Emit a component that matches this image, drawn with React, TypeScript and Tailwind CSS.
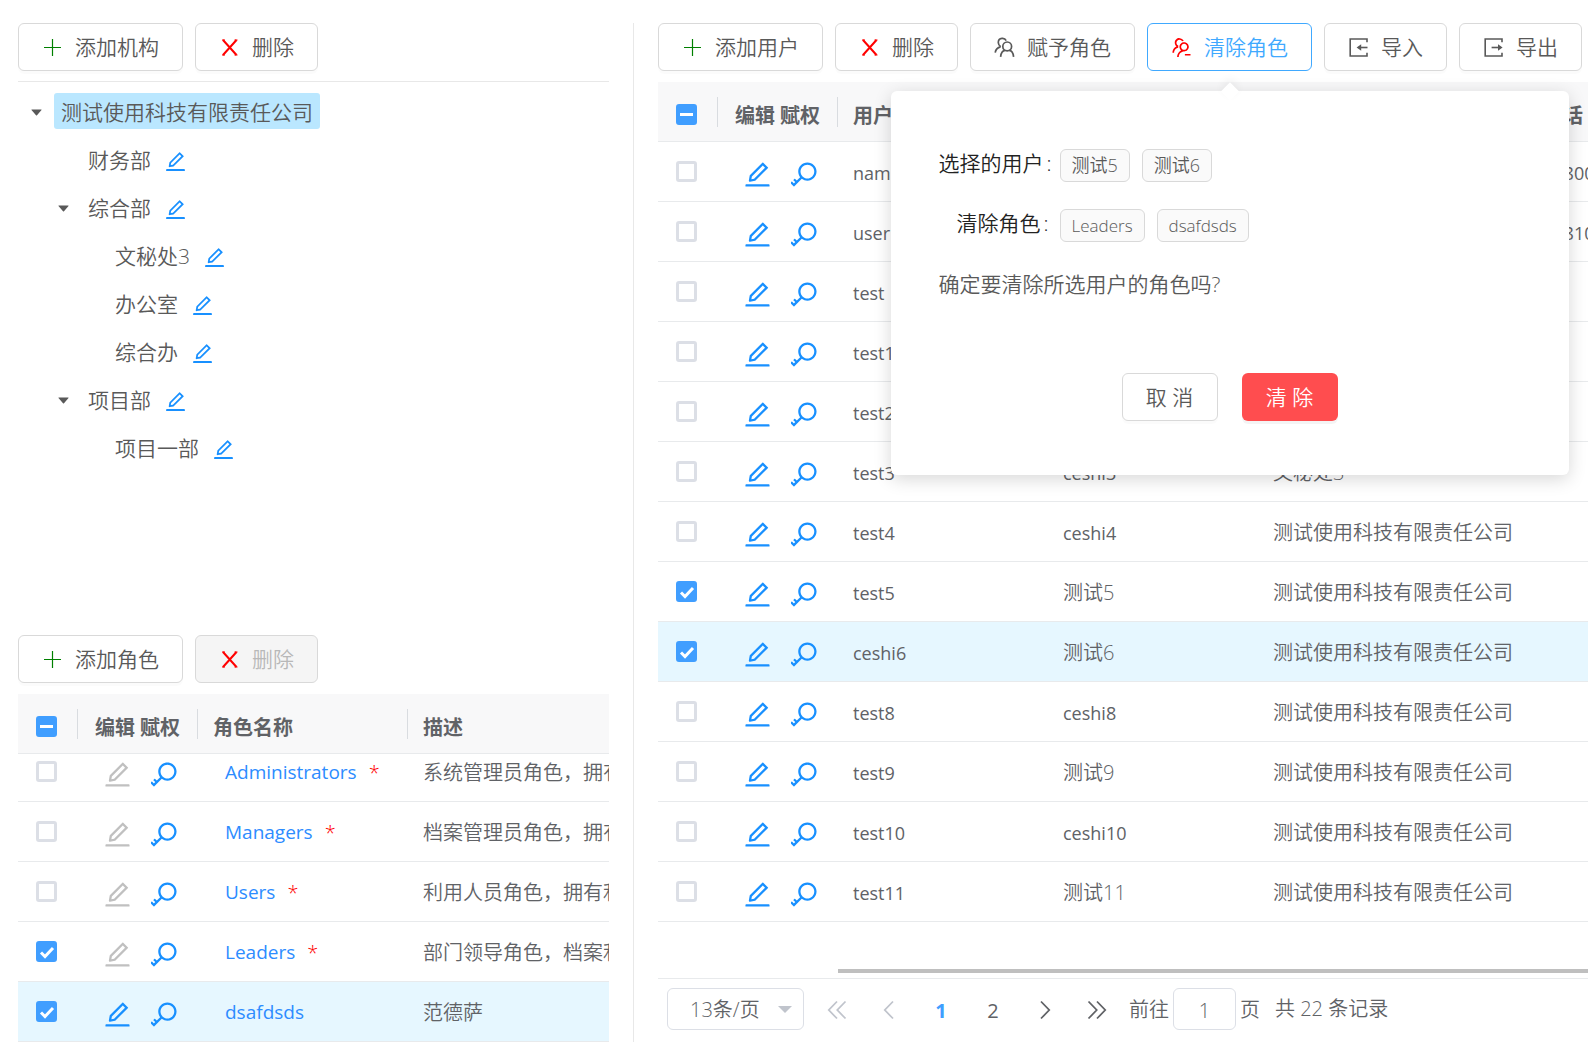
import type { ComponentType, ReactNode } from "react";
import { AiFillCaretDown, AiOutlineEdit, AiOutlineKey, AiOutlineUsergroupDelete } from "react-icons/ai";

type IconType = ComponentType<any>;

const TIGHT = "64 64 896 896";

function Icon({ as: As, className }: { as: IconType; className: string }) {
  return <As viewBox={TIGHT} className={`shrink-0 ${className}`} aria-hidden="true" />;
}

function PlusIcon({ className }: { className: string }) {
  return (
    <svg viewBox="0 0 21 21" className={`shrink-0 ${className}`} fill="none" stroke="currentColor" strokeWidth="1.2" aria-hidden="true">
      <path d="M10.5 2V19M2 10.5H19" />
    </svg>
  );
}

function CrossIcon({ className }: { className: string }) {
  return (
    <svg viewBox="0 0 21 21" className={`shrink-0 ${className}`} fill="none" stroke="currentColor" strokeWidth="2" aria-hidden="true">
      <path d="M4 3L17.5 18M17.5 3L4 18" />
      <path d="M3 3H6M15.5 3H18.5M3 18H6M15.5 18H18.5" strokeWidth="1" />
    </svg>
  );
}

function UsersIcon({ className }: { className: string }) {
  return (
    <svg viewBox="0 0 21 21" className={`shrink-0 ${className}`} fill="none" stroke="currentColor" strokeWidth="1.7" aria-hidden="true">
      <circle cx="13.2" cy="9.4" r="4.4" />
      <path d="M6.6 19.8C7 16.2 9 13.6 11.2 13.4M19.6 19.8C19.2 16.2 17.4 13.6 15.2 13.4" />
      <path d="M12.2 3.6C11.4 2 9.8 1.2 8 1.4C5.6 1.7 4.2 3.6 4.3 5.8C4.4 7.6 5.4 9 6.8 9.8M6.6 9.8C3.6 10.4 1.6 12.6 1.2 15.6" />
    </svg>
  );
}

function TransferIcon({ inward = false, className }: { inward?: boolean; className: string }) {
  return (
    <svg viewBox="0 0 21 21" className={`shrink-0 ${className}`} fill="none" stroke="currentColor" strokeWidth="1.6" aria-hidden="true">
      <path d="M19 5.2V2H2.2V19H19V15.8" />
      {inward ? (
        <>
          <path d="M19.5 10.5H12" />
          <path d="M8.6 10.5L13.2 7.2V13.8Z" fill="currentColor" stroke="none" />
        </>
      ) : (
        <>
          <path d="M8.6 10.5H16" />
          <path d="M19.6 10.5L15 7.2V13.8Z" fill="currentColor" stroke="none" />
        </>
      )}
    </svg>
  );
}

function ToolButton({
  icon,
  children,
  active = false,
  disabled = false,
}: {
  icon: ReactNode;
  children: ReactNode;
  active?: boolean;
  disabled?: boolean;
}) {
  const tone = active
    ? "border-[#40a9ff] bg-white text-[#40a9ff]"
    : disabled
      ? "border-[#d9d9d9] bg-[#f5f5f5] text-[#b8b8b8]"
      : "border-[#d9d9d9] bg-white text-[#595959] shadow-[0_3px_0_rgba(0,0,0,0.016)]";
  return (
    <button
      type="button"
      disabled={disabled}
      className={`flex h-12 shrink-0 items-center gap-3 rounded-md border px-[23px] text-[21px] whitespace-nowrap ${tone}`}
    >
      {icon}
      <span className="pt-0.5">{children}</span>
    </button>
  );
}

const plus = <PlusIcon className="size-[21px] text-[#008000]" />;
const cross = <CrossIcon className="size-[21px] text-[#ff0000]" />;

function Checkbox({ label, checked = false, mixed = false }: { label: string; checked?: boolean; mixed?: boolean }) {
  const filled = checked || mixed;
  return (
    <span className="grid size-[21px] shrink-0">
      <input
        type="checkbox"
        aria-label={label}
        aria-checked={mixed ? "mixed" : checked}
        defaultChecked={checked}
        className={`size-[21px] appearance-none rounded-[3px] border-[3px] [grid-area:1/1] ${
          filled ? "border-[#409eff] bg-[#409eff]" : "border-[#dcdfe6] bg-white"
        }`}
      />
      {filled && (
        <svg viewBox="0 0 21 21" className="pointer-events-none size-[21px] [grid-area:1/1]" fill="none" stroke="#fff" strokeWidth="3" aria-hidden="true">
          <path d={mixed ? "M4 10.5H17" : "M5 11.5L9 15.5L17 7"} />
        </svg>
      )}
    </span>
  );
}

function RowActions({ name, locked = false }: { name: string; locked?: boolean }) {
  return (
    <div className="flex justify-center gap-5 pt-1.5 pl-[5px]">
      <button type="button" aria-label={`编辑 ${name}`} disabled={locked} className={locked ? "text-[#c0c0c0]" : "text-[#1890ff]"}>
        <Icon as={AiOutlineEdit} className="size-[27px]" />
      </button>
      <button type="button" aria-label={`赋权 ${name}`} className="text-[#1890ff]">
        <Icon as={AiOutlineKey} className="size-[27px]" />
      </button>
    </div>
  );
}

function HeadCell({ children, className = "", line = true }: { children: ReactNode; className?: string; line?: boolean }) {
  return (
    <th scope="col" className="h-[60px] border-b border-[#e8eaec] p-0 text-left font-bold">
      <div className={`flex h-[30px] items-center whitespace-nowrap ${line ? "border-r border-[#d9dce0]" : ""} ${className}`}>{children}</div>
    </th>
  );
}

const tree = [
  { name: "测试使用科技有限责任公司", level: 0, open: true, selected: true },
  { name: "财务部", level: 1 },
  { name: "综合部", level: 1, open: true },
  { name: "文秘处3", level: 2 },
  { name: "办公室", level: 2 },
  { name: "综合办", level: 2 },
  { name: "项目部", level: 1, open: true },
  { name: "项目一部", level: 2 },
];

const indents = ["pl-0", "pl-[27px]", "pl-[54px]"];

function OrgTree() {
  return (
    <ul role="tree" aria-label="机构" className="border-t border-[#e8e8e8] pt-[5px] text-[21px] text-[#595959]">
      {tree.map((n) => (
        <li key={n.name} role="treeitem" aria-selected={!!n.selected} className={`flex h-12 items-center ${indents[n.level]}`}>
          <span className="flex w-9 shrink-0 justify-center pt-[3px]">
            {n.open && (
              <button type="button" aria-label={`收起 ${n.name}`}>
                <Icon as={AiFillCaretDown} className="size-[13px]" />
              </button>
            )}
          </span>
          <span className={`flex h-9 items-center rounded-[3px] px-[7px] pt-[3px] ${n.selected ? "bg-[#bae7ff]" : ""}`}>{n.name}</span>
          {!n.selected && (
            <button type="button" aria-label={`编辑 ${n.name}`} className="ml-[7px] pt-[5px] text-[#1890ff]">
              <Icon as={AiOutlineEdit} className="size-[21px]" />
            </button>
          )}
        </li>
      ))}
    </ul>
  );
}

const roles = [
  { name: "Administrators", desc: "系统管理员角色，拥有系统管理权限", system: true },
  { name: "Managers", desc: "档案管理员角色，拥有档案管理权限", system: true },
  { name: "Users", desc: "利用人员角色，拥有利用权限", system: true },
  { name: "Leaders", desc: "部门领导角色，档案利用审批", system: true, checked: true },
  { name: "dsafdsds", desc: "范德萨", checked: true, current: true },
];

function RoleCols() {
  return (
    <colgroup>
      <col className="w-[60px]" />
      <col className="w-[120px]" />
      <col className="w-[210px]" />
      <col />
    </colgroup>
  );
}

function RoleTable() {
  return (
    <div className="text-[20px] text-[#606266]">
      <table className="w-full table-fixed border-separate border-spacing-0 bg-[#f8f8f9]">
        <RoleCols />
        <thead>
          <tr>
            <HeadCell className="pt-1.5 pl-[18px]">
              <Checkbox label="全选角色" mixed />
            </HeadCell>
            <HeadCell className="justify-center pt-2">编辑 赋权</HeadCell>
            <HeadCell className="pt-2 pl-[15px]">角色名称</HeadCell>
            <HeadCell className="pt-2 pl-[15px]" line={false}>
              描述
            </HeadCell>
          </tr>
        </thead>
      </table>
      <div className="flex h-[288px] flex-col justify-end overflow-hidden">
        <table className="w-full shrink-0 table-fixed border-separate border-spacing-0">
          <RoleCols />
          <tbody>
            {roles.map((r) => (
              <tr key={r.name} className={`*:h-[60px] *:border-b *:border-[#e8eaec] *:p-0 ${r.current ? "bg-[#e6f7ff]" : ""}`}>
                <td>
                  <div className="pl-[18px]">
                    <Checkbox label={r.name} checked={r.checked} />
                  </div>
                </td>
                <td>
                  <RowActions name={r.name} locked={r.system} />
                </td>
                <td>
                  <div className="flex items-center gap-3 pt-0.5 pl-[27px] whitespace-nowrap">
                    <a href="#" className="text-[19px] font-normal text-[#2d8cff]">
                      {r.name}
                    </a>
                    {r.system && <span className="text-[#ff0000]">*</span>}
                  </div>
                </td>
                <td>
                  <div className="overflow-hidden pt-0.5 pl-[15px] whitespace-nowrap">{r.desc}</div>
                </td>
              </tr>
            ))}
          </tbody>
        </table>
      </div>
    </div>
  );
}

const company = "测试使用科技有限责任公司";

const users = [
  { login: "name", name: "测试", org: company, phone: "13800138000" },
  { login: "user", name: "ceshi", org: company, phone: "13810013810" },
  { login: "test", name: "ceshi", org: company, phone: "" },
  { login: "test1", name: "ceshi1", org: company, phone: "" },
  { login: "test2", name: "ceshi2", org: company, phone: "" },
  { login: "test3", name: "ceshi3", org: "文秘处3", phone: "" },
  { login: "test4", name: "ceshi4", org: company, phone: "" },
  { login: "test5", name: "测试5", org: company, phone: "", checked: true },
  { login: "ceshi6", name: "测试6", org: company, phone: "", checked: true, current: true },
  { login: "test8", name: "ceshi8", org: company, phone: "" },
  { login: "test9", name: "测试9", org: company, phone: "" },
  { login: "test10", name: "ceshi10", org: company, phone: "" },
  { login: "test11", name: "测试11", org: company, phone: "" },
];

/* Latin-only values are set one step smaller and heavier, to sit evenly beside the Chinese ones. */
function CellText({ children }: { children: string }) {
  const latin = /^\w*$/.test(children);
  return <div className={`pt-[3px] pl-[15px] ${latin ? "text-[18px] font-normal" : ""}`}>{children}</div>;
}

function UserTable() {
  return (
    <div className="flex min-h-0 flex-1 flex-col overflow-hidden text-[20px] text-[#606266]">
      <table className="w-[1080px] table-fixed border-separate border-spacing-0">
        <colgroup>
          <col className="w-[60px]" />
          <col className="w-[120px]" />
          <col className="w-[210px]" />
          <col className="w-[210px]" />
          <col className="w-[270px]" />
          <col className="w-[210px]" />
        </colgroup>
        <thead className="bg-[#f8f8f9]">
          <tr>
            <HeadCell className="pt-1.5 pl-[18px]">
              <Checkbox label="全选用户" mixed />
            </HeadCell>
            <HeadCell className="justify-center pt-2">编辑 赋权</HeadCell>
            <HeadCell className="pt-2 pl-[15px]">用户名</HeadCell>
            <HeadCell className="pt-2 pl-[15px]">姓名</HeadCell>
            <HeadCell className="pt-2 pl-[15px]">机构</HeadCell>
            <HeadCell className="pt-2 pl-[15px]">电话</HeadCell>
          </tr>
        </thead>
        <tbody>
          {users.map((u) => (
            <tr
              key={u.login}
              className={`*:h-[60px] *:border-b *:border-[#e8eaec] *:p-0 *:whitespace-nowrap ${u.current ? "bg-[#e6f7ff]" : ""}`}
            >
              <td>
                <div className="pl-[18px]">
                  <Checkbox label={u.login} checked={u.checked} />
                </div>
              </td>
              <td>
                <RowActions name={u.login} />
              </td>
              <td>
                <CellText>{u.login}</CellText>
              </td>
              <td>
                <CellText>{u.name}</CellText>
              </td>
              <td>
                <CellText>{u.org}</CellText>
              </td>
              <td>
                <CellText>{u.phone}</CellText>
              </td>
            </tr>
          ))}
        </tbody>
      </table>
      <div className="mt-auto mb-[5px] ml-[180px] h-1 shrink-0 bg-[#bfbfbf]" />
    </div>
  );
}

function Tag({ children, latin = false }: { children: ReactNode; latin?: boolean }) {
  return (
    <span
      className={`flex h-[33px] items-center rounded-md border border-[#d9d9d9] bg-[#fafafa] px-[11px] text-[#595959] ${latin ? "text-[17px]" : "text-[18px]"}`}
    >
      {children}
    </span>
  );
}

function ClearRolePopover() {
  return (
    <div
      role="dialog"
      aria-label="清除角色"
      className="absolute top-full left-1/2 z-10 mt-5 w-[678px] -translate-x-1/2 rounded-md bg-white px-12 pt-[58px] pb-[54px] text-[21px] text-[#595959] shadow-[0_4px_18px_rgba(0,0,0,0.16)]"
    >
      <div className="absolute -top-[6px] left-1/2 size-[13px] -translate-x-1/2 rotate-45 bg-white shadow-[-3px_-3px_8px_rgba(0,0,0,0.05)]" />
      <div className="relative">
        <div className="flex h-[33px] items-center">
          <span className="flex w-[121px] gap-[3px] pb-1 text-[#222222]">
            选择的用户<span>:</span>
          </span>
          <div className="flex gap-3">
            <Tag>测试5</Tag>
            <Tag>测试6</Tag>
          </div>
        </div>
        <div className="mt-[27px] flex h-[33px] items-center">
          <span className="flex w-[121px] gap-[3px] pb-1 pl-[18px] text-[#222222]">
            清除角色<span>:</span>
          </span>
          <div className="flex gap-3">
            <Tag latin>Leaders</Tag>
            <Tag latin>dsafdsds</Tag>
          </div>
        </div>
        <p className="mt-[26px] leading-[33px]">确定要清除所选用户的角色吗?</p>
        <div className="mt-[72px] flex justify-center gap-6">
          <button type="button" className="h-12 w-24 rounded-md border border-[#d9d9d9] bg-white pt-0.5 shadow-[0_3px_0_rgba(0,0,0,0.016)]">
            取 消
          </button>
          <button type="button" className="h-12 w-24 rounded-md bg-[#ff4d4f] pt-0.5 text-white shadow-[0_3px_0_rgba(0,0,0,0.045)]">
            清 除
          </button>
        </div>
      </div>
    </div>
  );
}

function PageArrow({ label, d, disabled = false }: { label: string; d: string; disabled?: boolean }) {
  return (
    <button
      type="button"
      aria-label={label}
      disabled={disabled}
      className={`flex h-10 w-[52px] items-center justify-center pt-0.5 ${disabled ? "text-[#c0c4cc]" : "text-[#606266]"}`}
    >
      <svg viewBox="0 0 20 20" className="size-5" fill="none" stroke="currentColor" strokeWidth="1.8" aria-hidden="true">
        <path d={d} />
      </svg>
    </button>
  );
}

function Pager() {
  return (
    <nav aria-label="分页" className="flex items-center border-t border-[#e8eaec] pt-[9px] pb-3 pl-[9px] text-[20px] whitespace-nowrap text-[#606266]">
      <div className="grid w-[137px] shrink-0 items-center">
        <select
          aria-label="每页条数"
          className="h-[42px] w-full appearance-none rounded-md border border-[#dcdfe6] bg-white pt-0.5 pl-[22px] [grid-area:1/1]"
          defaultValue="13"
        >
          <option value="13">13条/页</option>
          <option value="20">20条/页</option>
        </select>
        <svg viewBox="0 0 14 7" className="pointer-events-none mr-3 h-[7px] w-[14px] justify-self-end [grid-area:1/1]" fill="#c0c4cc" aria-hidden="true">
          <path d="M0 0H14L7 7Z" />
        </svg>
      </div>
      <div className="ml-[7px] flex shrink-0 items-center">
        <PageArrow label="首页" disabled d="M10 1.5L1.8 10L10 18.5M18.5 1.5L10.3 10L18.5 18.5" />
        <PageArrow label="上一页" disabled d="M14 1.5L5.8 10L14 18.5" />
        <button type="button" aria-current="page" className="h-10 w-[52px] pt-1 font-bold text-[#409eff]">
          1
        </button>
        <button type="button" className="h-10 w-[52px] pt-1 font-normal">
          2
        </button>
        <PageArrow label="下一页" d="M6 1.5L14.2 10L6 18.5" />
        <PageArrow label="末页" d="M1.5 1.5L9.7 10L1.5 18.5M10 1.5L18.2 10L10 18.5" />
      </div>
      <label className="ml-[6px] flex shrink-0 items-center gap-1">
        <span className="pt-0.5">前往</span>
        <input type="text" aria-label="页码" defaultValue="1" className="h-[42px] w-[63px] rounded-md border border-[#dcdfe6] pt-0.5 text-center" />
        <span className="pt-0.5">页</span>
      </label>
      <span className="ml-[15px]">共 22 条记录</span>
    </nav>
  );
}

export default function App() {
  return (
    <div className="flex h-screen overflow-hidden bg-white pt-[23px] pb-[11px] pl-[18px] font-['Open_Sans','Noto_Sans_CJK_SC',sans-serif] [font-weight:350]">
      <aside className="flex w-[40%] max-w-[616px] shrink-0 flex-col border-r border-[#e8e8e8] pr-6">
        <div className="flex gap-3 pb-[10px]">
          <ToolButton icon={plus}>添加机构</ToolButton>
          <ToolButton icon={cross}>删除</ToolButton>
        </div>
        <div className="min-h-0 flex-1">
          <OrgTree />
        </div>
        <div className="flex gap-3 pb-[11px]">
          <ToolButton icon={plus}>添加角色</ToolButton>
          <ToolButton icon={cross} disabled>
            删除
          </ToolButton>
        </div>
        <RoleTable />
      </aside>
      <main className="flex min-w-0 flex-1 flex-col pl-6">
        <div className="flex gap-3 pb-[11px]">
          <ToolButton icon={plus}>添加用户</ToolButton>
          <ToolButton icon={cross}>删除</ToolButton>
          <ToolButton icon={<UsersIcon className="size-[21px]" />}>赋予角色</ToolButton>
          <div className="relative shrink-0">
            <ToolButton active icon={<Icon as={AiOutlineUsergroupDelete} className="size-[21px] text-[#ff0000]" />}>
              清除角色
            </ToolButton>
            <ClearRolePopover />
          </div>
          <ToolButton icon={<TransferIcon inward className="size-[21px]" />}>导入</ToolButton>
          <ToolButton icon={<TransferIcon className="size-[21px]" />}>导出</ToolButton>
        </div>
        <UserTable />
        <Pager />
      </main>
    </div>
  );
}
